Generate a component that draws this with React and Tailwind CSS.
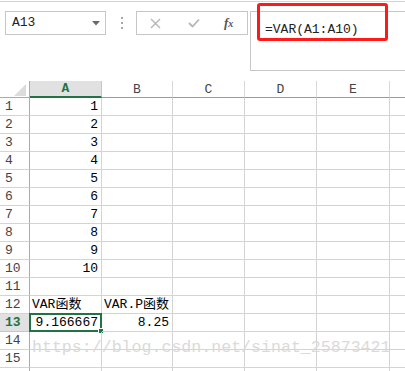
const mono = { fontFamily: '"Liberation Mono", "Noto Sans CJK SC", monospace' };

const colWidths = ['w-[72px]', 'w-[71px]', 'w-[72px]', 'w-[72px]', 'w-[73px]'];
const colNames = ['A', 'B', 'C', 'D', 'E'];

const rows = [
  ['1', ''], ['2', ''], ['3', ''], ['4', ''], ['5', ''],
  ['6', ''], ['7', ''], ['8', ''], ['9', ''], ['10', ''],
  ['', ''],
  [{ t: 'VAR函数', left: true }, { t: 'VAR.P函数', left: true }],
  ['9.166667', '8.25'],
  ['', ''], ['', ''], ['', ''],
];

const Cell = ({ value, width, selected }) => {
  const v = typeof value === 'string' ? { t: value } : value;
  return (
    <div
      className={`relative h-[18px] shrink-0 ${width} border-r border-b border-[#d4d4d4] flex items-center ${
        v.left ? 'justify-start pl-[2px]' : 'justify-end pr-[3px]'
      } text-[13px] leading-none text-black whitespace-nowrap`}
    >
      {v.t}
      {selected && (
        <>
          <div className="absolute -left-px -top-px right-[-1px] bottom-[-1px] border-2 border-[#217346]" />
          <div className="absolute right-[-3px] bottom-[-3px] w-[6px] h-[6px] bg-[#217346] border border-white" />
        </>
      )}
    </div>
  );
};

export default function App() {
  return (
    <div className="relative w-[405px] h-[371px] overflow-hidden bg-white" style={mono}>
      {/* toolbar */}
      <div className="pt-px">
        <div className="border-t border-[#d4d4d4]" />
        <div className="flex items-start pt-[9px]">
          <div className="ml-[5px] w-[101px] h-[24px] border border-[#c6c6c6] flex items-center justify-between pl-[6px] pr-[5px]">
            <span className="text-[13px] text-[#222]">A13</span>
            <svg width="8" height="5" viewBox="0 0 8 5">
              <path d="M0 0 H8 L4 4.5 Z" fill="#6b6b6b" />
            </svg>
          </div>
          <div className="ml-[15px] mt-[6px] flex flex-col gap-[3px]">
            <div className="w-[2px] h-[2px] bg-[#a6a6a6]" />
            <div className="w-[2px] h-[2px] bg-[#a6a6a6]" />
            <div className="w-[2px] h-[2px] bg-[#a6a6a6]" />
          </div>
          <div className="ml-[13px] w-[112px] h-[24px] border border-[#c6c6c6] flex items-center">
            <svg className="ml-[13px]" width="11" height="11" viewBox="0 0 11 11">
              <path d="M1 1 L10 10 M10 1 L1 10" stroke="#b5b5b5" strokeWidth="1.4" />
            </svg>
            <svg className="ml-[27px]" width="12" height="10" viewBox="0 0 12 10">
              <path d="M1 5 L4.5 8.5 L11 1.5" stroke="#b5b5b5" strokeWidth="1.8" fill="none" />
            </svg>
            <span
              className="ml-[24px] text-[13px] italic font-bold text-[#555]"
              style={{ fontFamily: '"Liberation Serif", serif' }}
            >
              f<span className="text-[10px]">x</span>
            </span>
          </div>
          <div className="ml-[2px] flex-1 h-[60px] border border-r-0 border-[#c6c6c6] pl-[14px] pt-[5px]">
            <span className="text-[13px] leading-[18px] text-[#222]">=VAR(A1:A10)</span>
          </div>
        </div>
      </div>

      {/* grid */}
      <div className="mt-[10px]">
        <div className="flex h-[17px]">
          <div className="w-[30px] shrink-0 border-r border-b border-[#ababab] relative">
            <svg className="absolute left-[14px] top-[3px]" width="12" height="12" viewBox="0 0 12 12">
              <path d="M12 0 V12 H0 Z" fill="#dcdcdc" />
            </svg>
          </div>
          {colNames.map((c, i) => (
            <div
              key={c}
              className={`${colWidths[i]} shrink-0 border-r flex items-center justify-center text-[13px] leading-none ${
                i === 0
                  ? 'bg-[#e1e1e1] border-[#c6c6c6] border-b-2 border-b-[#217346] text-[#217346] font-bold'
                  : 'border-[#d9d9d9] border-b border-b-[#9b9b9b] text-[#444]'
              }`}
            >
              {c}
            </div>
          ))}
          <div className="flex-1 border-b border-[#9b9b9b]" />
        </div>

        {rows.map((r, ri) => {
          const n = ri + 1;
          const sel = n === 13;
          return (
            <div key={n} className="flex">
              <div
                className={`w-[30px] h-[18px] shrink-0 border-r border-b flex items-center pl-[5px] text-[13px] leading-none ${
                  sel
                    ? 'bg-[#e1e1e1] border-r-[#217346] border-b-[#c6c6c6] text-[#217346] font-bold'
                    : 'border-r-[#ababab] border-b-[#d4d4d4] text-[#444]'
                }`}
              >
                {n < 16 ? n : ''}
              </div>
              <Cell value={r[0]} width={colWidths[0]} selected={sel} />
              <Cell value={r[1]} width={colWidths[1]} />
              <Cell value="" width={colWidths[2]} />
              <Cell value="" width={colWidths[3]} />
              <Cell value="" width={colWidths[4]} />
              <div className="flex-1 h-[18px] border-b border-[#d4d4d4]" />
            </div>
          );
        })}
      </div>

      {/* annotation + watermark overlays */}
      <div className="absolute left-[257px] top-[3px] w-[131px] h-[38px] border-[3px] border-[#ff1a1a] rounded-[3px]" />
      <div className="absolute left-[32px] top-[338px] text-[16.6px] leading-[20px] text-[#dadada] whitespace-nowrap">
        https://blog.csdn.net/sinat_25873421
      </div>
    </div>
  );
}
